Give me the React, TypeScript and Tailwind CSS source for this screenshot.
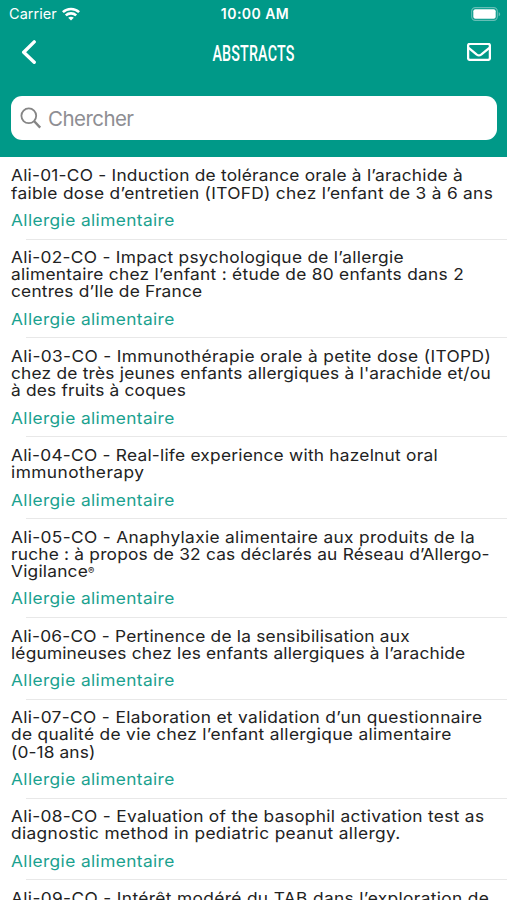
type Line = { text: string; tracking: string; mark?: string };

type Abstract = {
	id: string;
	lines: Line[];
	topic: string;
};

const abstracts: Abstract[] = [
	{
		id: "01",
		lines: [
			{ text: "Ali-01-CO - Induction de tolérance orale à l’arachide à", tracking: "tracking-[0.21px]" },
			{ text: "faible dose d’entretien (ITOFD) chez l’enfant de 3 à 6 ans", tracking: "tracking-[0.285px]" },
		],
		topic: "Allergie alimentaire",
	},
	{
		id: "02",
		lines: [
			{ text: "Ali-02-CO - Impact psychologique de l’allergie", tracking: "tracking-[0.27px]" },
			{ text: "alimentaire chez l’enfant : étude de 80 enfants dans 2", tracking: "tracking-[0.26px]" },
			{ text: "centres d’Ile de France", tracking: "tracking-[0.18px]" },
		],
		topic: "Allergie alimentaire",
	},
	{
		id: "03",
		lines: [
			{ text: "Ali-03-CO - Immunothérapie orale à petite dose (ITOPD)", tracking: "tracking-[0.34px]" },
			{ text: "chez de très jeunes enfants allergiques à l'arachide et/ou", tracking: "tracking-[0.2px]" },
			{ text: "à des fruits à coques", tracking: "tracking-[0.17px]" },
		],
		topic: "Allergie alimentaire",
	},
	{
		id: "04",
		lines: [
			{ text: "Ali-04-CO - Real-life experience with hazelnut oral", tracking: "tracking-[0.22px]" },
			{ text: "immunotherapy", tracking: "tracking-[0.42px]" },
		],
		topic: "Allergie alimentaire",
	},
	{
		id: "05",
		lines: [
			{ text: "Ali-05-CO - Anaphylaxie alimentaire aux produits de la", tracking: "tracking-[0.31px]" },
			{ text: "ruche : à propos de 32 cas déclarés au Réseau d’Allergo-", tracking: "tracking-[0.19px]" },
			{ text: "Vigilance", tracking: "tracking-[0.2px]", mark: "®" },
		],
		topic: "Allergie alimentaire",
	},
	{
		id: "06",
		lines: [
			{ text: "Ali-06-CO - Pertinence de la sensibilisation aux", tracking: "tracking-[0.2px]" },
			{ text: "légumineuses chez les enfants allergiques à l’arachide", tracking: "tracking-[0.17px]" },
		],
		topic: "Allergie alimentaire",
	},
	{
		id: "07",
		lines: [
			{ text: "Ali-07-CO - Elaboration et validation d’un questionnaire", tracking: "tracking-[0.325px]" },
			{ text: "de qualité de vie chez l’enfant allergique alimentaire", tracking: "tracking-[0.305px]" },
			{ text: "(0-18 ans)", tracking: "tracking-[0.1px]" },
		],
		topic: "Allergie alimentaire",
	},
	{
		id: "08",
		lines: [
			{ text: "Ali-08-CO - Evaluation of the basophil activation test as", tracking: "tracking-[0.29px]" },
			{ text: "diagnostic method in pediatric peanut allergy.", tracking: "tracking-[0.34px]" },
		],
		topic: "Allergie alimentaire",
	},
	{
		id: "09",
		lines: [
			{ text: "Ali-09-CO - Intérêt modéré du TAB dans l’exploration de", tracking: "tracking-[0.335px]" },
		],
		topic: "Allergie alimentaire",
	},
];

const WifiIcon = () => (
	<svg className="h-[14px] w-[18px]" viewBox="0 0 18 14" fill="none" stroke="currentColor" strokeWidth="2.6">
		<path d="M.9 5.1C5.2.9 12.8.9 17.1 5.1" />
		<path d="M3.8 8.4c2.9-2.7 7.5-2.7 10.4 0" />
		<path d="M6.2 10.8c1.6-1.4 4-1.4 5.6 0L9 13.6z" fill="currentColor" stroke="none" />
	</svg>
);

const BatteryIcon = () => (
	<svg className="h-[14px] w-[30px]" viewBox="0 0 30 14">
		<rect x="0.7" y="0.6" width="25.6" height="12.8" rx="3.6" fill="none" stroke="#66beb6" strokeWidth="1.1" />
		<rect x="2.3" y="2.2" width="22.4" height="9.6" rx="2" fill="white" />
		<path d="M27.7 4.9c2 .8 2 3.6 0 4.4z" fill="#66beb6" />
	</svg>
);

const StatusBar = () => (
	<div className="grid h-[27px] grid-cols-3 items-center pl-[9px] pr-[6px]">
		<div className="flex items-center gap-[5px] text-[14.5px] tracking-[0.05px]">
			<span>Carrier</span>
			<WifiIcon />
		</div>
		<div className="whitespace-nowrap text-center text-[14px] font-semibold tracking-[0.45px]">10:00 AM</div>
		<div className="flex justify-end">
			<BatteryIcon />
		</div>
	</div>
);

const NavBar = () => (
	<div className="grid h-[50px] grid-cols-3 items-center pl-5 pr-4">
		<svg className="h-6 w-[18px]" viewBox="0 0 18 24" fill="none" stroke="currentColor" strokeWidth="3.4" strokeLinecap="round" strokeLinejoin="round">
			<path d="M14.2 1.9 3.7 12.2l10.5 10.1" />
		</svg>
		<h1 className="mr-1 scale-x-[0.635] pt-1 text-center font-['Roboto'] text-[22.5px] font-medium tracking-[0.25px]">ABSTRACTS</h1>
		<svg className="h-[18px] w-6 justify-self-end" viewBox="0 0 24 18" fill="none" stroke="currentColor" strokeWidth="2.3" strokeLinejoin="round">
			<rect x="1.1" y="0.9" width="21.8" height="16" rx="1.8" />
			<path d="m1.6 4.8 8.2 6.8c1.3 1 3 1 4.3 0l8.3-6.8" />
		</svg>
	</div>
);

const SearchField = () => (
	<div className="ml-[11px] mr-[10px] mt-[19px] flex h-11 items-center rounded-[11px] bg-white pl-[9px] text-[#8e8e93]">
		<svg className="h-[22px] w-[22px]" viewBox="0 0 22 22" fill="none" stroke="#858585" strokeWidth="1.8">
			<circle cx="8.8" cy="8.8" r="7.4" />
			<path d="m14 14 6.2 6.6" strokeWidth="2.4" />
		</svg>
		<span className="ml-1.5 pt-0.5 text-[20.5px] tracking-[-0.55px]">Chercher</span>
	</div>
);

const AbstractRow = ({ lines, topic }: Abstract) => (
	<li className="px-[11px] pt-[9.7px]">
		<h2 className="origin-left scale-x-105 text-[16.5px] leading-[17.1px] text-[#222]">
			{lines.map((line) => (
				<span key={line.text} className={`block whitespace-nowrap ${line.tracking}`}>
					{line.text}
					{line.mark && <span className="relative -top-[3px] text-[9px] leading-none">{line.mark}</span>}
				</span>
			))}
		</h2>
		<p className="mt-[9.4px] origin-left scale-x-105 text-[16.5px] leading-[19px] tracking-[0.36px] text-[#1aa18f]">{topic}</p>
		<div className="-mr-[11px] ml-[15px] mt-[8.5px] h-px bg-[#e8e8e8]" />
	</li>
);

export default function App() {
	return (
		<div className="h-[900px] w-[507px] overflow-hidden bg-white font-['Inter',sans-serif]">
			<header className="h-[157px] bg-[#009988] text-white">
				<StatusBar />
				<NavBar />
				<SearchField />
			</header>
			<ul className="pt-[0.8px]">
				{abstracts.map((abstract) => (
					<AbstractRow key={abstract.id} {...abstract} />
				))}
			</ul>
		</div>
	);
}
